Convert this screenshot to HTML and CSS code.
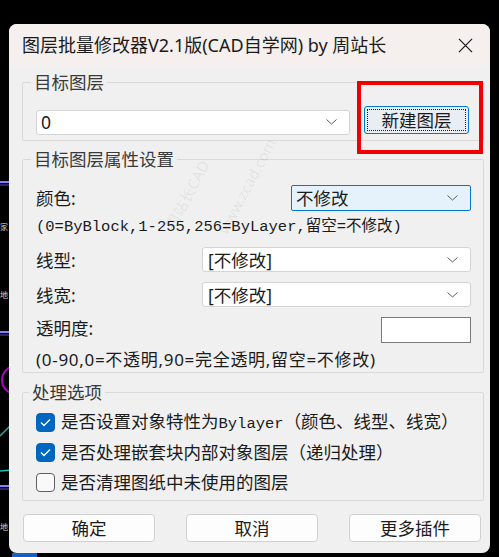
FILE: index.html
```html
<!DOCTYPE html>
<html lang="zh-CN">
<head>
    <meta charset="UTF-8">
    <meta name="viewport" content="width=device-width, initial-scale=1.0">
    <title>图层批量修改器</title>
    <link rel="stylesheet" href="styles.css">
</head>
<body>
    <!-- CAD drawing behind the dialog -->
    <svg class="backdrop" width="499" height="557" viewBox="0 0 499 557">
        <line x1="0" y1="182" x2="12" y2="182" stroke="#8a7cff" stroke-width="2"/>
        <line x1="0" y1="185" x2="12" y2="185" stroke="#5a48c8" stroke-width="1"/>
        <line x1="0" y1="332" x2="12" y2="332" stroke="#8a7cff" stroke-width="2"/>
        <line x1="0" y1="335" x2="12" y2="335" stroke="#5a48c8" stroke-width="1"/>
        <line x1="0" y1="486" x2="12" y2="486" stroke="#8a7cff" stroke-width="2"/>
        <line x1="0" y1="489" x2="12" y2="489" stroke="#5a48c8" stroke-width="1"/>
        <circle cx="16" cy="380" r="14" fill="none" stroke="#b000c8" stroke-width="2"/>
        <line x1="0" y1="436" x2="12" y2="424" stroke="#20b0a8" stroke-width="1.5"/>
        <line x1="0" y1="471" x2="12" y2="470" stroke="#20c0b8" stroke-width="1.5"/>
        <text x="0" y="230" class="bg-text">家</text>
        <text x="0" y="298" class="bg-text">地</text>
        <text x="0" y="530" class="bg-text">地</text>
        <rect x="12" y="553" width="25" height="4" fill="#1262c4"/>
    </svg>

    <div class="dialog">
        <div class="titlebar">
            <span class="title">图层批量修改器V2.1版(CAD自学网) by 周站长</span>
            <svg class="close" width="16" height="16" viewBox="0 0 16 16">
                <path d="M1 1 L15 15 M15 1 L1 15" stroke="#1b1b1b" stroke-width="1.3" fill="none"/>
            </svg>
        </div>

        <div class="content">
            <fieldset class="group group-layer">
                <legend>目标图层</legend>
                <div class="layer-row">
                    <div class="combo combo-layer">
                        <span>0</span>
                        <svg class="chevron" width="11" height="6" viewBox="0 0 11 6"><polyline points="0.5,0.5 5.5,5 10.5,0.5" fill="none" stroke="#5c5c5c" stroke-width="1"/></svg>
                    </div>
                    <button class="btn btn-new"><span class="focus">新建图层</span></button>
                </div>
            </fieldset>

            <fieldset class="group group-props">
                <legend>目标图层属性设置</legend>
                <div class="prop-row row-color">
                    <span class="label">颜色:</span>
                    <div class="combo combo-color">
                        <span>不修改</span>
                        <svg class="chevron" width="11" height="6" viewBox="0 0 11 6"><polyline points="0.5,0.5 5.5,5 10.5,0.5" fill="none" stroke="#5c5c5c" stroke-width="1"/></svg>
                    </div>
                </div>
                <div class="note note-mono">(0=ByBlock,1-255,256=ByLayer,留空=不修改)</div>
                <div class="prop-row row-linetype">
                    <span class="label">线型:</span>
                    <div class="combo combo-wide">
                        <span>[不修改]</span>
                        <svg class="chevron" width="11" height="6" viewBox="0 0 11 6"><polyline points="0.5,0.5 5.5,5 10.5,0.5" fill="none" stroke="#5c5c5c" stroke-width="1"/></svg>
                    </div>
                </div>
                <div class="prop-row row-lineweight">
                    <span class="label">线宽:</span>
                    <div class="combo combo-wide">
                        <span>[不修改]</span>
                        <svg class="chevron" width="11" height="6" viewBox="0 0 11 6"><polyline points="0.5,0.5 5.5,5 10.5,0.5" fill="none" stroke="#5c5c5c" stroke-width="1"/></svg>
                    </div>
                </div>
                <div class="prop-row row-alpha">
                    <span class="label">透明度:</span>
                    <div class="textbox"></div>
                </div>
                <div class="note note-sans">(0-90,0=不透明,90=完全透明,留空=不修改)</div>
            </fieldset>

            <fieldset class="group group-opts">
                <legend>处理选项</legend>
                <div class="check-row">
                    <span class="check checked"><svg width="19" height="19" viewBox="0 0 19 19"><polyline points="5,9.5 8,12.5 14,6.5" fill="none" stroke="#fff" stroke-width="1.3"/></svg></span>
                    <span class="check-text">是否设置对象特性为<span class="mono">Bylayer</span>（颜色、线型、线宽）</span>
                </div>
                <div class="check-row">
                    <span class="check checked"><svg width="19" height="19" viewBox="0 0 19 19"><polyline points="5,9.5 8,12.5 14,6.5" fill="none" stroke="#fff" stroke-width="1.3"/></svg></span>
                    <span class="check-text">是否处理嵌套块内部对象图层（递归处理）</span>
                </div>
                <div class="check-row">
                    <span class="check"></span>
                    <span class="check-text">是否清理图纸中未使用的图层</span>
                </div>
            </fieldset>

            <div class="actions">
                <button class="btn">确定</button>
                <button class="btn">取消</button>
                <button class="btn">更多插件</button>
            </div>
        </div>

        <!-- annotation + watermark over the dialog -->
        <div class="highlight"></div>
        <div class="watermark wm-name">周站长CAD</div>
        <div class="watermark wm-site">www.zcad.com</div>
    </div>
</body>
</html>
```

FILE: styles.css
```css
:root {
    --bg-window: #f0f0f0;
    --bg-title: #f5f0ee;
    --text: #1b1b1b;
    --text-group: #3a3a3a;
    --border-group: #d9d9d9;
    --accent: #0067c0;
    --ui-font: "Noto Sans", "Noto Sans CJK SC", sans-serif;
    --mono-font: "Liberation Mono", "Noto Sans CJK SC", monospace;
}

* {
    box-sizing: border-box;
}

html, body {
    width: 499px;
    height: 557px;
}

body {
    margin: 0;
    padding: 24px 0 0 9px;
    background-color: #000;
    overflow: hidden;
    position: relative;
    font-family: var(--ui-font);
    color: var(--text);
}

.backdrop {
    position: absolute;
    left: 0;
    top: 0;
}

.bg-text {
    font-family: "Noto Sans CJK SC", sans-serif;
    font-size: 8px;
    fill: #cfcfcf;
}

.dialog {
    position: relative;
    width: 481px;
    height: 529px;
    background-color: var(--bg-window);
    border-radius: 8px;
    overflow: hidden;
}

.titlebar {
    height: 42px;
    display: flex;
    align-items: center;
    padding: 0 17px 0 13px;
    background-color: var(--bg-title);
}

.title {
    font-size: 18px;
    line-height: 22px;
    white-space: nowrap;
}

.close {
    margin-left: auto;
    width: 15px;
    height: 15px;
}

.content {
    padding: 0 6px 0 13px;
}

/* group boxes */
.group {
    margin: 0;
    min-width: 0;
    border: 1px solid var(--border-group);
    border-radius: 2px;
    padding: 0 12px 0 13px;
}

.group legend {
    margin-left: -5px;
    padding: 0 3px;
    font-size: 17.5px;
    line-height: 20px;
    color: var(--text-group);
}

.group-layer {
    margin-top: 6px;
    padding-bottom: 6px;
}

.group-props {
    margin-top: 8px;
    padding-bottom: 3px;
}

.group-opts {
    margin-top: 9px;
    padding-bottom: 3px;
}

.layer-row {
    margin-top: 13px;
    height: 29px;
    display: flex;
    align-items: center;
    justify-content: space-between;
}

/* combo boxes */
.combo {
    display: flex;
    align-items: center;
    background-color: #fff;
    border: 1px solid #d4d4d4;
    border-radius: 3px;
    padding: 0 12px 0 5px;
    font-size: 17.5px;
    color: var(--text);
}

.combo .chevron {
    margin-left: auto;
}

.combo-layer {
    width: 314px;
    height: 25px;
    margin-top: 5px;
    padding-left: 4px;
}

.combo-color {
    width: 180px;
    height: 26px;
    background-color: #e5f1fb;
    border-color: #0078d4;
    border-radius: 2px;
    padding-left: 4px;
}

.combo-wide {
    width: 269px;
    height: 25px;
}

.combo span {
    line-height: 22px;
}

.textbox {
    width: 90px;
    height: 26px;
    background-color: #fff;
    border: 1px solid #7a7a7a;
}

/* property rows */
.prop-row {
    display: flex;
    align-items: center;
    justify-content: space-between;
}

.label {
    font-size: 17.5px;
    line-height: 22px;
    color: var(--text);
}

.row-color {
    margin-top: 16px;
    height: 26px;
}

.row-linetype {
    margin-top: 4px;
    height: 25px;
}

.row-lineweight {
    margin-top: 10px;
    height: 25px;
}

.row-alpha {
    margin-top: 10px;
    height: 26px;
}

.row-alpha .label {
    margin-top: -4px;
}

.note {
    white-space: nowrap;
    color: var(--text);
}

.note-mono {
    font-family: var(--mono-font);
    font-size: 15.5px;
    line-height: 32px;
}

.note-sans {
    margin-top: 8px;
    font-size: 17px;
    line-height: 18px;
    letter-spacing: 0.7px;
}

/* check boxes */
.group-opts legend {
    margin-left: -7px;
}

.check-row {
    height: 30px;
    display: flex;
    align-items: center;
    gap: 6px;
}

.check-row:first-of-type {
    margin-top: 5px;
}

.check {
    width: 19px;
    height: 19px;
    border-radius: 4px;
    border: 1px solid #5f5f5f;
    background-color: #f9f9f9;
    flex-shrink: 0;
}

.check svg {
    display: block;
    margin: -1px;
}

.check.checked {
    background-color: var(--accent);
    border-color: var(--accent);
}

.check-text {
    font-size: 17.5px;
    line-height: 22px;
    white-space: nowrap;
    color: var(--text);
}

.mono {
    font-family: var(--mono-font);
    font-size: 15.5px;
}

/* buttons */
.btn {
    width: 132px;
    height: 28px;
    padding: 0;
    background-color: #fdfdfd;
    border: 1px solid #d0d0d0;
    border-radius: 4px;
    font-family: var(--ui-font);
    font-size: 17.5px;
    line-height: 22px;
    color: var(--text);
}

.btn-new {
    width: 105px;
    margin-right: 2px;
    padding: 2px;
    background-color: #e9eef4;
    border: 1px solid #0078d4;
    border-radius: 3px;
}

.btn-new .focus {
    display: block;
    height: 100%;
    border: 1px dotted #1b1b1b;
    line-height: 20px;
}

.actions {
    margin-top: 13px;
    padding-left: 1px;
    display: flex;
    gap: 31px;
}

/* red annotation box drawn over the screenshot */
.highlight {
    position: absolute;
    left: 348px;
    top: 57px;
    width: 126px;
    height: 73px;
    border: 4px solid #f00000;
}

.watermark {
    position: absolute;
    font-family: "Noto Sans", "Noto Sans CJK SC", sans-serif;
    font-size: 15px;
    color: rgba(0, 0, 0, 0.07);
    transform: rotate(-62deg);
    white-space: nowrap;
}

.wm-name {
    left: 140px;
    top: 160px;
}

.wm-site {
    left: 185px;
    top: 152px;
}
```
